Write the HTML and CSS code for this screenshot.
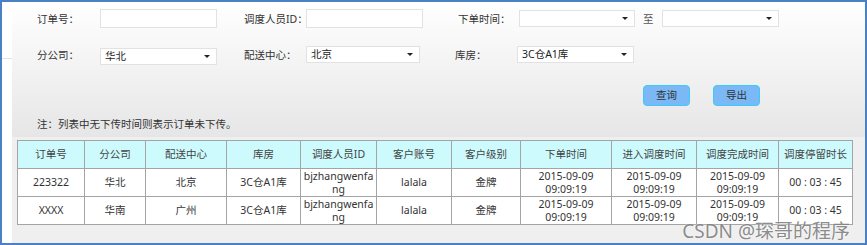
FILE: index.html
```html
<!DOCTYPE html>
<html lang="zh-CN">
<head>
<meta charset="utf-8">
<title>调度查询</title>
<link rel="stylesheet" href="styles.css">
</head>
<body>
<div class="frame">
  <div class="side"><div class="side-line"></div></div>
  <div class="panel">
    <div class="search">
      <div class="row row1">
        <span class="label l1">订单号：</span>
        <div class="input w117"></div>
        <span class="label l2">调度人员ID：</span>
        <div class="input w117"></div>
        <span class="label l3">下单时间：</span>
        <div class="select w116 short"></div>
        <span class="to">至</span>
        <div class="select w117 short"></div>
      </div>
      <div class="row row2">
        <span class="label l1">分公司：</span>
        <div class="select w117 low">华北</div>
        <span class="label l2">配送中心：</span>
        <div class="select w114">北京</div>
        <span class="label l3 l3b">库房：</span>
        <div class="select w117">3C仓A1库</div>
      </div>
      <div class="row btns">
        <button class="btn">查询</button>
        <button class="btn">导出</button>
      </div>
      <div class="note">注：列表中无下传时间则表示订单未下传。</div>
    </div>
    <div class="result">
      <table class="grid">
        <colgroup>
          <col style="width:67px"><col style="width:61px"><col style="width:81px"><col style="width:74px">
          <col style="width:76px"><col style="width:75px"><col style="width:69px"><col style="width:91px">
          <col style="width:85px"><col style="width:82px"><col style="width:74px">
        </colgroup>
        <thead>
          <tr>
            <th>订单号</th><th>分公司</th><th>配送中心</th><th>库房</th><th>调度人员ID</th><th>客户账号</th><th>客户级别</th><th>下单时间</th><th>进入调度时间</th><th>调度完成时间</th><th>调度停留时长</th>
          </tr>
        </thead>
        <tbody>
          <tr>
            <td>223322</td><td>华北</td><td>北京</td><td>3C仓A1库</td><td class="brk">bjzhangwenfang</td><td>lalala</td><td>金牌</td><td>2015-09-09 09:09:19</td><td>2015-09-09 09:09:19</td><td>2015-09-09 09:09:19</td><td>00 : 03 : 45</td>
          </tr>
          <tr>
            <td>XXXX</td><td>华南</td><td>广州</td><td>3C仓A1库</td><td class="brk">bjzhangwenfang</td><td>lalala</td><td>金牌</td><td>2015-09-09 09:09:19</td><td>2015-09-09 09:09:19</td><td>2015-09-09 09:09:19</td><td>00 : 03 : 45</td>
          </tr>
        </tbody>
      </table>
    </div>
  </div>
  <div class="watermark">CSDN @琛哥的程序</div>
</div>
</body>
</html>
```

FILE: styles.css
```css
* { box-sizing: border-box; }
html, body { margin: 0; padding: 0; }
body {
  width: 867px;
  height: 245px;
  font-family: "Noto Sans", "Noto Sans CJK SC", sans-serif;
  font-size: 10.5px;
  color: #333;
  background: #fff;
  overflow: hidden;
}
.frame {
  position: relative;
  width: 867px;
  height: 245px;
  border: 2px solid #4a80c4;
  display: flex;
}
.side {
  width: 11px;
  background: #fff;
  padding-top: 56px;
}
.side-line { height: 1px; background: #e4e4e4; }
.panel {
  flex: 1;
  display: flex;
  flex-direction: column;
  background: #efefef;
}
.search {
  height: 135px;
  background: linear-gradient(#ffffff, #e6e6e6);
  padding-left: 25px;
  display: flex;
  flex-direction: column;
}
.row { display: flex; align-items: center; height: 20px; }
.row1 { margin-top: 6px; }
.row2 { margin-top: 16px; }
.label { white-space: nowrap; color: #333; }
.l1 { width: 63px; }
.l2 { width: 62px; margin-left: 27px; }
.l3 { width: 61px; margin-left: 35px; }
.l3b { width: 62px; }
.input, .select {
  height: 19px;
  background: #fff;
  border: 1px solid #e2e2e2;
}
.select {
  position: relative;
  height: 17px;
  line-height: 15px;
  padding-left: 4px;
  color: #222;
}
.select::after {
  content: "";
  position: absolute;
  right: 6px;
  top: 6px;
  border-left: 3px solid transparent;
  border-right: 3px solid transparent;
  border-top: 3px solid #222;
}
.low { margin-top: 4px; }
.short { height: 17px; }
.w117 { width: 117px; }
.w116 { width: 116px; }
.w114 { width: 114px; }
.to { width: 27px; padding-left: 8px; color: #555; }
.btns { margin-top: 21px; height: 21px; padding-left: 606px; gap: 23px; }
.btn {
  width: 47px;
  height: 21px;
  border: 1px solid #3ccbf8;
  border-radius: 4px;
  background: #7ab8f6;
  color: #333;
  font-family: inherit;
  font-size: 10.5px;
  padding: 0;
  line-height: 19px;
}
.note { margin-top: 10px; height: 17px; line-height: 17px; }
.result { padding: 3px 12px 0 5px; }
.grid {
  width: 835px;
  table-layout: fixed;
  border-collapse: collapse;
  background: #fff;
}
.grid th, .grid td {
  border: 1px solid #a4a4a4;
  height: 28px;
  padding: 0 2px;
  text-align: center;
  font-weight: normal;
  line-height: 12.5px;
  color: #333;
}
.grid th { background: #cdfbfd; color: #444; }
.grid td.brk { word-break: break-all; padding: 0 1px; }
.watermark {
  position: absolute;
  right: 15px;
  top: 218px;
  font-size: 19px;
  line-height: 23px;
  color: rgba(110, 110, 110, 0.8);
  text-shadow: 0 0 2px #fff;
  white-space: nowrap;
}
```
